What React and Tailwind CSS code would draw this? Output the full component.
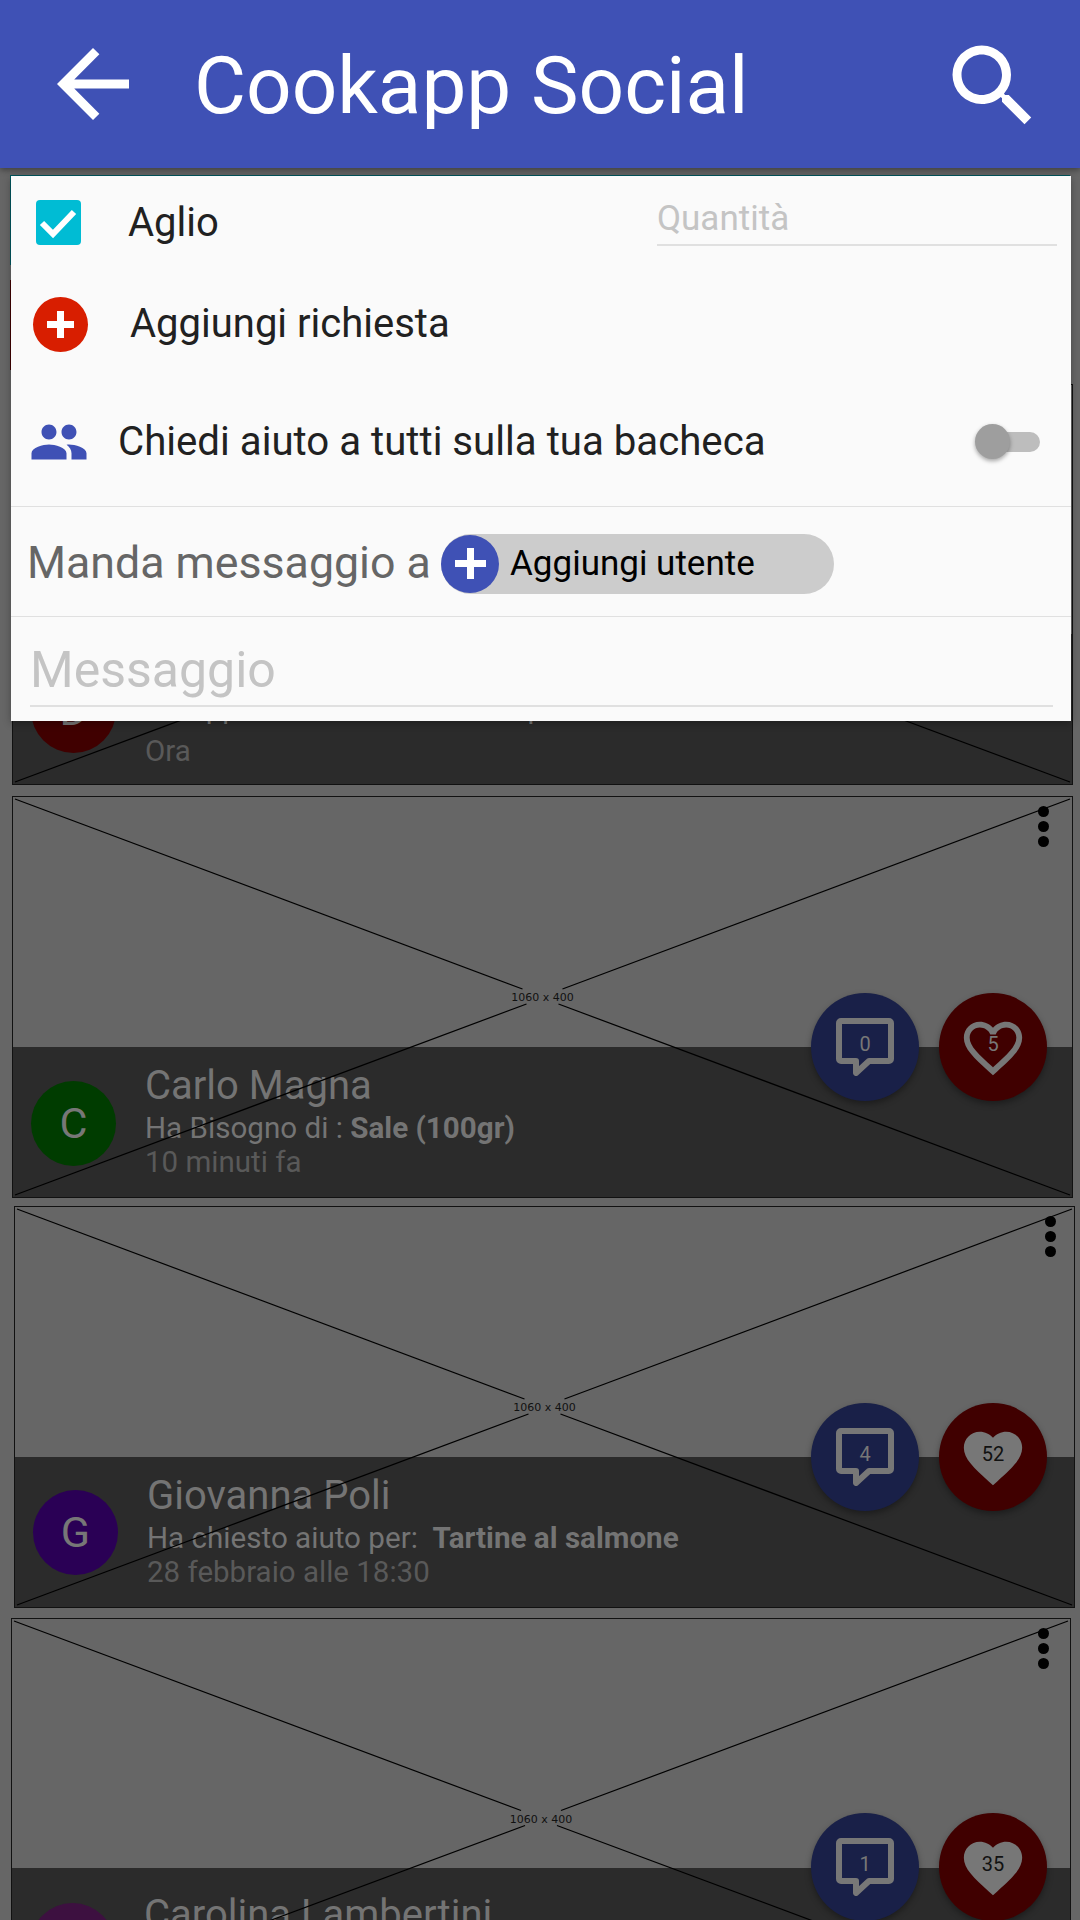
import React from "react";
import { MdArrowBack, MdSearch, MdGroup, MdFavorite, MdFavoriteBorder } from "react-icons/md";

function Plus({ size, thick }) {
  const a = (size - thick) / 2;
  return (
    <svg width={size} height={size} viewBox={`0 0 ${size} ${size}`} fill="#fff">
      <rect x={a} y="0" width={thick} height={size} />
      <rect x="0" y={a} width={size} height={thick} />
    </svg>
  );
}

function Bubble() {
  return (
    <svg width="58" height="58" viewBox="0 0 58 58" fill="none">
      <path d="M5 3 H53 A2 2 0 0 1 55 5 V41 A2 2 0 0 1 53 43 H33 L20 55 V43 H5 A2 2 0 0 1 3 41 V5 A2 2 0 0 1 5 3 Z" stroke="#777777" strokeWidth="6" strokeLinejoin="round" />
    </svg>
  );
}

function CrossLines({ top }) {
  return (
    <svg className="absolute inset-0 w-full h-full" viewBox="0 0 1060 400" preserveAspectRatio="none">
      {top && <line x1="2" y1="2" x2="510" y2="192" stroke="#000" strokeWidth="1.2" />}
      {top && <line x1="1058" y1="2" x2="550" y2="192" stroke="#000" strokeWidth="1.2" />}
      <line x1="2" y1="398" x2="514" y2="207" stroke="#000" strokeWidth="1.2" />
      <line x1="1058" y1="398" x2="546" y2="207" stroke="#000" strokeWidth="1.2" />
    </svg>
  );
}

function Bar({ avatar, avatarClass, textTop = "mt-[16px]", timeLeading = "leading-[30px]", name, sub, bold, time }) {
  return (
    <div className="h-[150px] bg-[#2b2b2b] flex items-start pl-[18px]">
      <div className={`w-[85px] h-[85px] rounded-full flex items-center justify-center text-[43px] text-[#777777] shrink-0 ${avatarClass}`}>{avatar}</div>
      <div className={`ml-[29px] flex flex-col ${textTop}`}>
        <div className="text-[40px] leading-[46px] text-[#747474] whitespace-nowrap">{name}</div>
        <div className="text-[29.6px] leading-[38px] text-[#747474] whitespace-pre">
          {sub}<b className="font-bold">{bold}</b>
        </div>
        <div className={`text-[29.5px] text-[#595959] whitespace-nowrap ${timeLeading}`}>{time}</div>
      </div>
    </div>
  );
}

function Card({ pos, dotsPos, fabPos, comments, likes, filled, ...bar }) {
  return (
    <div className={`relative shrink-0 border border-[#111] bg-[#666666] flex flex-col justify-end ${pos}`}>
      <Bar {...bar} />
      <CrossLines top />
      <span className="absolute left-1/2 -translate-x-1/2 top-[194px] text-[11px] leading-[14px] text-[#111] font-['DejaVu_Sans',sans-serif] whitespace-nowrap">1060 x 400</span>
      <div className={`absolute top-[9px] flex flex-col gap-[4px] ${dotsPos}`}>
        <i className="block w-[11px] h-[11px] rounded-full bg-black" />
        <i className="block w-[11px] h-[11px] rounded-full bg-black" />
        <i className="block w-[11px] h-[11px] rounded-full bg-black" />
      </div>
      <div className={`absolute flex gap-[20px] ${fabPos}`}>
        <div className="relative w-[108px] h-[108px] rounded-full bg-[#192048] shadow-[0_3px_6px_rgba(0,0,0,0.35)] flex items-center justify-center">
          <span className="absolute left-[25px] top-[25px]"><Bubble /></span>
          <span className="relative -mt-[6px] text-[20px] text-[#777777]">{comments}</span>
        </div>
        <div className="relative w-[108px] h-[108px] rounded-full bg-[#400000] shadow-[0_3px_6px_rgba(0,0,0,0.35)] flex items-center justify-center">
          <span className="absolute left-[19px] top-[20px]">
            {filled ? <MdFavorite size={70} color="#777777" /> : <MdFavoriteBorder size={70} color="#777777" />}
          </span>
          <span className={`relative -mt-[6px] text-[20px] ${filled ? "text-[#111]" : "text-[#777777]"}`}>{likes}</span>
        </div>
      </div>
    </div>
  );
}

export default function App() {
  return (
    <div className="relative h-[1920px] w-[1080px] overflow-hidden bg-[#666666] font-['Roboto',sans-serif]">
      <header className="relative z-10 h-[168px] bg-[#3f51b5] flex items-center pl-[39px] pr-[33px] text-white shadow-[0_2px_6px_rgba(0,0,0,0.4)]">
        <MdArrowBack size={108} className="shrink-0" />
        <h1 className="ml-[47px] text-[80px] leading-[92px] font-normal flex-1 mt-[4px]">Cookapp Social</h1>
        <MdSearch size={108} className="shrink-0 mt-[4px]" />
      </header>

      <main className="flex flex-col">
        <div className="mt-[7px] ml-[10px] w-[1060px] h-[90px] bg-[#00585f] shrink-0" />
        <div className="mt-[15px] ml-[10px] w-[1060px] h-[90px] bg-[#400000] shrink-0" />
        <div className="relative mt-[14px] ml-[12px] w-[1061px] h-[401px] shrink-0 border border-[#111] bg-[#666666] flex flex-col justify-end">
          <Bar avatar="D" avatarClass="mt-[34px] bg-[#400000]" textTop="mt-[9px]" timeLeading="leading-[48px]" name="Giuseppe Verdi" sub="Ha appena condiviso tutta la pasta al forno di nonna" bold="" time="Ora" />
          <CrossLines />
        </div>
        <Card pos="h-[402px] mt-[11px] ml-[12px] w-[1061px]" dotsPos="right-[23px]" fabPos="top-[196px] right-[25px]" avatar="C" avatarClass="mt-[34px] bg-[#003c00]" name="Carlo Magna" sub="Ha Bisogno di : " bold="Sale (100gr)" time="10 minuti fa" comments="0" likes="5" />
        <Card pos="h-[402px] mt-[8px] ml-[14px] w-[1061px]" dotsPos="right-[18px]" fabPos="top-[196px] right-[27px]" avatar="G" avatarClass="mt-[33px] bg-[#2a0055]" name="Giovanna Poli" sub="Ha chiesto aiuto per:  " bold="Tartine al salmone" time="28 febbraio alle 18:30" comments="4" likes="52" filled />
        <Card pos="h-[401px] mt-[10px] ml-[11px] w-[1060px]" dotsPos="right-[21px]" fabPos="top-[194px] right-[23px]" avatar="C" avatarClass="mt-[35px] bg-[#3d1040]" textTop="mt-[24px]" name="Carolina Lambertini" sub="Ha chiesto aiuto per: " bold="Pasta" time="Ieri" comments="1" likes="35" filled />
      </main>

      <section className="absolute z-20 left-[11px] top-[176px] w-[1060px] h-[545px] bg-[#fafafa] shadow-[0_2px_8px_rgba(0,0,0,0.3)] flex flex-col">
        <div className="h-[92px] flex items-center shrink-0">
          <div className="ml-[25px] w-[45px] h-[45px] rounded-[4px] bg-[#00bcd4] shrink-0">
            <svg width="45" height="45" viewBox="0 0 45 45" fill="none">
              <polyline points="6,23 17,34 38,12" stroke="#fff" strokeWidth="6" />
            </svg>
          </div>
          <span className="ml-[47px] mt-[2px] text-[40px] text-[#212121]">Aglio</span>
          <div className="ml-auto mr-[14px] w-[400px] h-[70px] -mt-[22px] border-b-2 border-[#e0e0e0] flex items-end pb-[5px] text-[35px] leading-[40px] text-[#c4c4c4]">Quantità</div>
        </div>
        <div className="h-[112px] flex items-center shrink-0">
          <div className="ml-[22px] w-[55px] h-[55px] rounded-full bg-[#d81e00] flex items-center justify-center shrink-0">
            <Plus size={27} thick={7} />
          </div>
          <span className="ml-[42px] text-[40px] text-[#212121]">Aggiungi richiesta</span>
        </div>
        <div className="h-[127px] pb-[3px] border-b border-[#e0e0e0] flex items-center shrink-0">
          <MdGroup size={60} color="#3f51b5" className="ml-[18px] shrink-0" />
          <span className="ml-[29px] mt-[2px] text-[40.2px] text-[#212121]">Chiedi aiuto a tutti sulla tua bacheca</span>
          <div className="relative ml-auto mr-[31px] w-[56px] h-[20px] rounded-full bg-[#bdbdbd]">
            <i className="absolute -left-[9px] -top-[8px] block w-[35px] h-[35px] rounded-full bg-[#9e9e9e] shadow-[0_2px_4px_rgba(0,0,0,0.35)]" />
          </div>
        </div>
        <div className="relative h-[110px] pt-[4px] border-b border-[#e0e0e0] flex items-center shrink-0">
          <span className="ml-[16px] text-[44.7px] text-[#666666]">Manda messaggio a</span>
          <div className="absolute left-[430px] flex items-center w-[393px] h-[60px] rounded-full bg-[#cccccc]">
            <div className="w-[58px] h-[58px] rounded-full bg-[#3f51b5] flex items-center justify-center shrink-0">
              <Plus size={31} thick={7} />
            </div>
            <span className="ml-[11px] mt-[2px] text-[35px] text-black">Aggiungi utente</span>
          </div>
        </div>
        <div className="ml-[19px] mr-[18px] h-[90px] border-b-2 border-[#e0e0e0] flex items-end pb-[5px] text-[50px] leading-[60px] text-[#c4c4c4] shrink-0">Messaggio</div>
      </section>
    </div>
  );
}
